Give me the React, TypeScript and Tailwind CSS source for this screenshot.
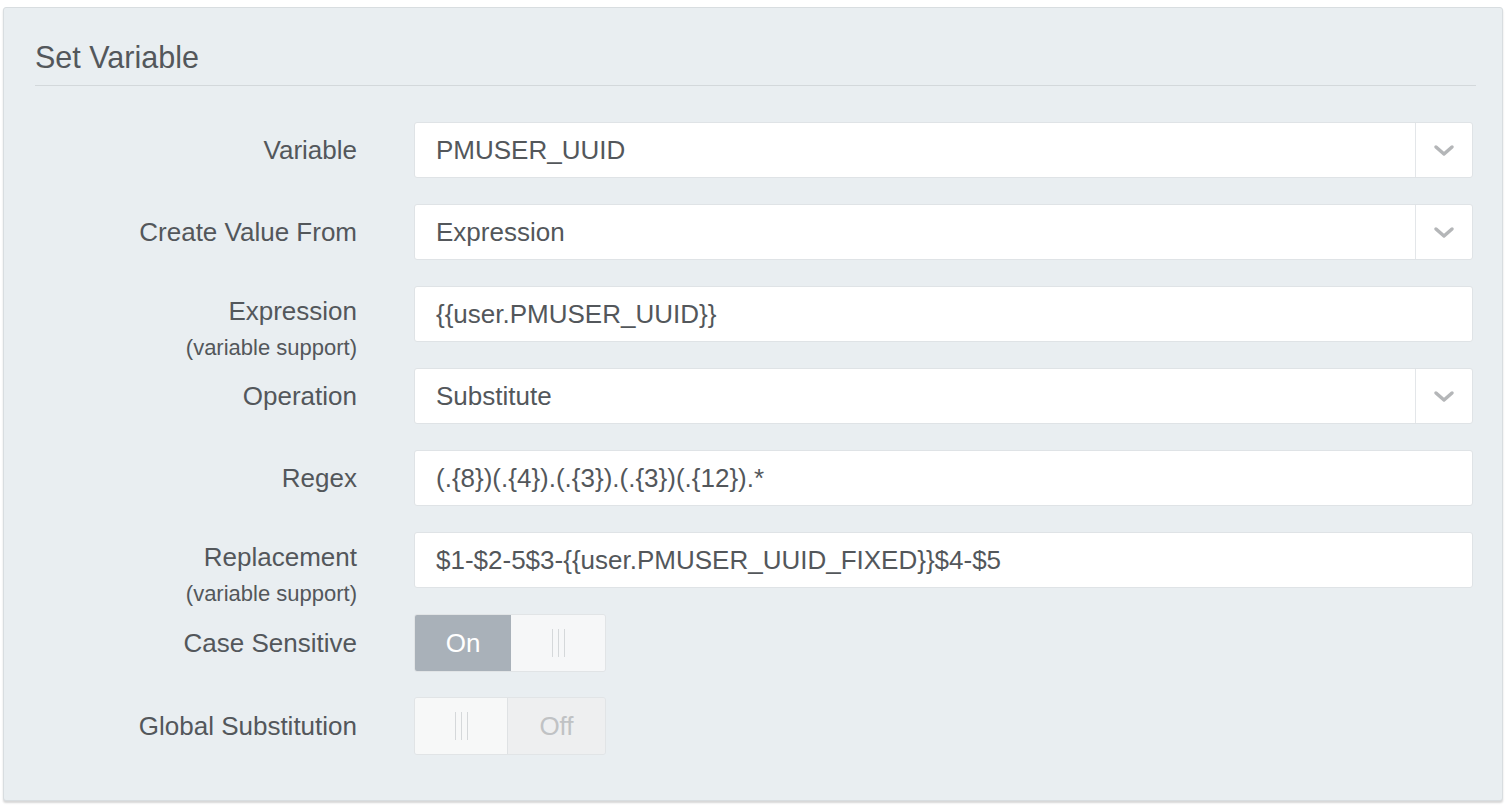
import React from 'react';

const FONT = { fontFamily: '"Liberation Sans", Arial, Helvetica, sans-serif' };

function Chevron() {
  return (
    <svg width="22" height="13" viewBox="0 0 22 13" fill="none">
      <polyline points="3,3 11,10 19,3" stroke="#b4b6b8" strokeWidth="3.5" strokeLinecap="round" strokeLinejoin="round" />
    </svg>
  );
}

function Grip() {
  return (
    <div className="flex gap-[5px] h-[28px]">
      <span className="w-px h-full bg-[#d5d8da]" />
      <span className="w-px h-full bg-[#d5d8da]" />
      <span className="w-px h-full bg-[#d5d8da]" />
    </div>
  );
}

function Label({ text, sub }: { text: string; sub?: boolean }) {
  return (
    <div className="w-[321px] shrink-0 text-right text-[#53575b]">
      {sub ? (
        <>
          <div className="text-[26px] leading-[50px]">{text}</div>
          <div className="text-[22px] leading-[24px]">(variable support)</div>
        </>
      ) : (
        <div className="text-[26px] leading-[56px]">{text}</div>
      )}
    </div>
  );
}

function TextField({ value }: { value: string }) {
  return (
    <div className="flex-1 h-[56px] bg-white border border-[#dfe3e6] rounded-[3px] flex items-center px-[21px] text-[26px] text-[#53575b] whitespace-nowrap">
      {value}
    </div>
  );
}

function SelectField({ value }: { value: string }) {
  return (
    <div className="flex-1 h-[56px] bg-white border border-[#dfe3e6] rounded-[3px] flex items-stretch text-[26px] text-[#53575b]">
      <div className="flex-1 flex items-center px-[21px]">{value}</div>
      <div className="w-[57px] border-l border-[#e3e6e9] flex items-center justify-center">
        <Chevron />
      </div>
    </div>
  );
}

function Toggle({ on }: { on: boolean }) {
  return (
    <div className="w-[192px] h-[58px] rounded-[3px] border border-[#e1e4e6] flex overflow-hidden">
      {on ? (
        <>
          <div className="w-[96px] bg-[#a9b1b9] flex items-center justify-center text-white text-[26px]">On</div>
          <div className="flex-1 bg-[#f6f7f8] flex items-center justify-center"><Grip /></div>
        </>
      ) : (
        <>
          <div className="w-[92px] bg-[#f7f8f8] flex items-center justify-center"><Grip /></div>
          <div className="flex-1 bg-[#eeeff0] border-l border-[#dfe2e4] flex items-center justify-center text-[#c0c2c4] text-[26px]">Off</div>
        </>
      )}
    </div>
  );
}

export default function App() {
  return (
    <div className="min-h-screen bg-white pt-[7px] pl-[3px]" style={FONT}>
      <div className="w-[1500px] h-[794px] bg-[#e9eef1] border border-[#d8dde0] rounded-[3px] shadow-[0_2px_2px_rgba(0,0,0,0.16)] pl-[31px] pr-[26px] pt-[31px]">
        <div className="h-[47px] border-b border-[#d3d8db] text-[30.5px] leading-[36px] text-[#53575b]">Set Variable</div>

        <div className="mt-[36px] pl-[1px] pr-[3px] flex flex-col gap-[26px]">
          <div className="flex h-[56px]">
            <Label text="Variable" />
            <div className="ml-[57px] flex-1 flex"><SelectField value="PMUSER_UUID" /></div>
          </div>
          <div className="flex h-[56px]">
            <Label text="Create Value From" />
            <div className="ml-[57px] flex-1 flex"><SelectField value="Expression" /></div>
          </div>
          <div className="flex h-[56px]">
            <Label text="Expression" sub />
            <div className="ml-[57px] flex-1 flex"><TextField value="{{user.PMUSER_UUID}}" /></div>
          </div>
          <div className="flex h-[56px]">
            <Label text="Operation" />
            <div className="ml-[57px] flex-1 flex"><SelectField value="Substitute" /></div>
          </div>
          <div className="flex h-[56px]">
            <Label text="Regex" />
            <div className="ml-[57px] flex-1 flex"><TextField value="(.{8})(.{4}).(.{3}).(.{3})(.{12}).*" /></div>
          </div>
          <div className="flex h-[56px]">
            <Label text="Replacement" sub />
            <div className="ml-[57px] flex-1 flex"><TextField value="$1-$2-5$3-{{user.PMUSER_UUID_FIXED}}$4-$5" /></div>
          </div>
          <div className="flex h-[58px] items-center">
            <div className="w-[321px] shrink-0 text-right text-[26px] text-[#53575b]">Case Sensitive</div>
            <div className="ml-[57px]"><Toggle on /></div>
          </div>
          <div className="flex h-[58px] items-center -mt-[1px]">
            <div className="w-[321px] shrink-0 text-right text-[26px] text-[#53575b]">Global Substitution</div>
            <div className="ml-[57px]"><Toggle on={false} /></div>
          </div>
        </div>
      </div>
    </div>
  );
}
